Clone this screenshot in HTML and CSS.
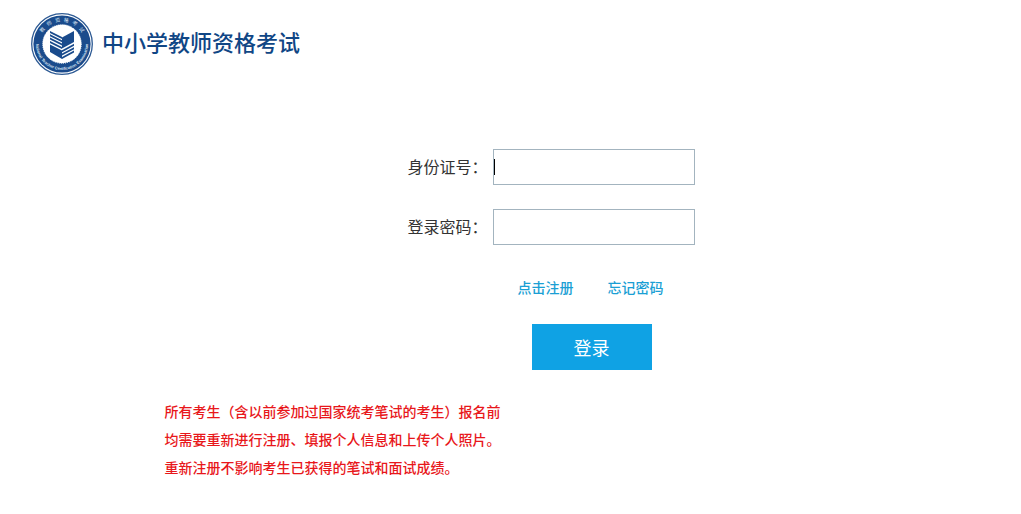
FILE: index.html
```html
<!DOCTYPE html>
<html lang="zh-CN">
<head>
<meta charset="utf-8">
<meta name="viewport" content="width=device-width, initial-scale=1">
<title>中小学教师资格考试</title>
<link rel="stylesheet" href="styles.css">
</head>
<body>
<header class="header">
  <svg class="emblem" viewBox="0 0 62 62" aria-hidden="true">
    <defs>
      <path id="arc-top" d="M8.5 31a22.500 22.500 0 0 1 45 0"/>
      <path id="arc-bottom" d="M5 31a26 26 0 0 0 52 0"/>
    </defs>
    <circle cx="31" cy="31" r="30.300" fill="#fff" stroke="#2d5a94" stroke-width="1.300"/>
    <circle cx="31" cy="31" r="28.600" fill="#1a4b8c"/>
    <circle cx="31" cy="31" r="19.300" fill="#fff"/>
    <circle cx="31" cy="31" r="19.300" fill="none" stroke="#fff" stroke-dasharray="1 1"/>
    <text class="emblem-cn"><textPath href="#arc-top" startOffset="50%">教&#160;&#160;&#160;师&#160;&#160;&#160;资&#160;&#160;&#160;格&#160;&#160;&#160;考&#160;&#160;&#160;试</textPath></text>
    <text class="emblem-en"><textPath href="#arc-bottom" startOffset="50%">National Teacher Certification Examination</textPath></text>
    <g fill="#1a4b8c">
      <path d="M19 18l12 6v2l-12-6zM19 21.300l12 6v2l-12-6zM19 24.600l12 6v2l-12-6zM19 27.900l12 6v2l-12-6z"/>
      <path d="M31 24.500l12-6.500v11l-12 6.500z"/>
      <path d="M19 31.500l12 6V46l-12-7z"/>
      <path d="M31 37.200l12-6.400v2l-12 6.400zM31 40.600l12-6.400v2l-12 6.400zM31 44l12-6.400v2l-12 6.400z"/>
    </g>
  </svg>
  <h1 class="title">中小学教师资格考试</h1>
</header>
<main class="main">
  <form class="form">
    <div class="row">
      <label class="label" for="id-number">身份证号：</label>
      <input class="field field-active" id="id-number" type="text">
    </div>
    <div class="row">
      <label class="label" for="password">登录密码：</label>
      <input class="field" id="password" type="password">
    </div>
    <div class="links">
      <a class="link" href="#register">点击注册</a>
      <a class="link" href="#forgot">忘记密码</a>
    </div>
    <button class="submit" type="submit">登录</button>
  </form>
  <p class="notice">所有考生（含以前参加过国家统考笔试的考生）报名前<br>均需要重新进行注册、填报个人信息和上传个人照片。<br>重新注册不影响考生已获得的笔试和面试成绩。</p>
</main>
</body>
</html>
```
FILE: styles.css
```css
* {
  box-sizing: border-box;
}

body {
  margin: 0;
  background: #fff;
  color: #333;
  font-family: "Noto Sans CJK SC", sans-serif;
}

.header {
  display: flex;
  align-items: center;
  gap: 9px;
  padding: 13px 31px 0;
}

.emblem {
  width: 62px;
  height: 62px;
}

.emblem-cn,
.emblem-en {
  fill: #dbe6f3;
  text-anchor: middle;
}

.emblem-cn {
  font-size: 5px;
}

.emblem-en {
  font: bold 4px "Liberation Sans", sans-serif;
}

.title {
  margin: 0 0 6px;
  color: #104685;
  font-size: 22px;
  font-weight: 500;
  line-height: 32px;
}

.main {
  max-width: 692px;
  margin: 0 auto;
  padding-top: 74px;
}

.form {
  display: flex;
  flex-direction: column;
  gap: 24px;
  width: 287px;
  margin-left: 243px;
}

.row {
  display: flex;
  align-items: center;
  gap: 5px;
}

.label {
  padding-bottom: 2px;
  font-size: 16px;
  line-height: 24px;
}

.field {
  width: 202px;
  height: 36px;
  padding: 0 8px;
  border: 1px solid #a3b4bf;
  background: #fff;
  color: #333;
  font: inherit;
  outline: none;
}

/* Insertion mark of the active field */
.field-active {
  background: linear-gradient(#000, #000) 0 50% / 1px 16px no-repeat #fff;
}

.links {
  display: flex;
  gap: 34px;
  margin: 8px 0 3px 110px;
}

.link {
  color: #1b9fd4;
  font-size: 14px;
  font-weight: 500;
  line-height: 20px;
  text-decoration: none;
}

.submit {
  width: 120px;
  height: 46px;
  margin-left: 124px;
  padding: 0;
  border: 0;
  background: #0fa2e4;
  color: #fff;
  font: 18px "Noto Sans CJK SC", sans-serif;
}

.notice {
  margin: 27px 0 0;
  color: #e8171b;
  font-size: 14px;
  font-weight: 500;
  line-height: 28px;
}
```
